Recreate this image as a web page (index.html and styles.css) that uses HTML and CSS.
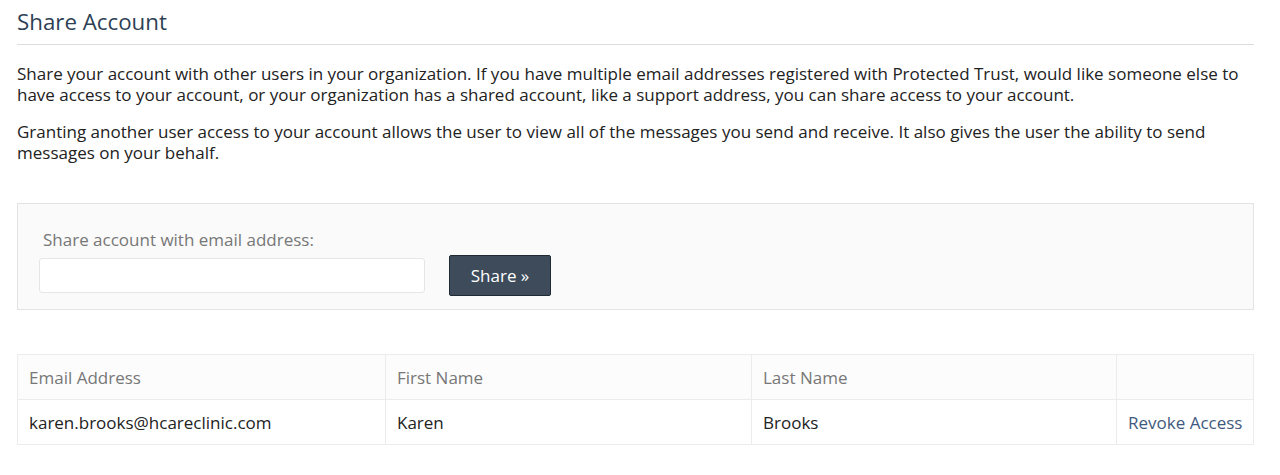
FILE: index.html
```html
<!DOCTYPE html>
<html lang="en">
<head>
<meta charset="utf-8">
<title>Share Account</title>
<link rel="stylesheet" href="styles.css">
</head>
<body>
<div class="page">
  <h1 class="title">Share Account</h1>
  <p class="intro">Share your account with other users in your organization. If you have multiple email addresses registered with Protected Trust, would like someone else to have access to your account, or your organization has a shared account, like a support address, you can share access to your account.</p>
  <p class="intro">Granting another user access to your account allows the user to view all of the messages you send and receive. It also gives the user the ability to send messages on your behalf.</p>

  <div class="well">
    <label class="well-label" for="share-email">Share account with email address:</label>
    <div class="well-row">
      <input id="share-email" class="email-input" type="text">
      <button class="btn-share" type="button">Share »</button>
    </div>
  </div>

  <table class="share-table">
    <thead>
      <tr>
        <th class="col-email">Email Address</th>
        <th class="col-first">First Name</th>
        <th class="col-last">Last Name</th>
        <th class="col-action"></th>
      </tr>
    </thead>
    <tbody>
      <tr>
        <td>karen.brooks@hcareclinic.com</td>
        <td>Karen</td>
        <td>Brooks</td>
        <td><a class="revoke" href="#">Revoke Access</a></td>
      </tr>
    </tbody>
  </table>
</div>
</body>
</html>
```

FILE: styles.css
```css
* { box-sizing: border-box; }

html, body {
  margin: 0;
  padding: 0;
  background: #ffffff;
}

body {
  font-family: "Open Sans", "Liberation Sans", Arial, sans-serif;
  font-size: 17px;
  color: #222222;
}

.page {
  padding: 0 26px 0 17px;
}

.title {
  margin: 0;
  padding: 9px 0 9px;
  font-size: 22.3px;
  line-height: 26px;
  font-weight: 400;
  color: #2e3f55;
  border-bottom: 1px solid #dddddd;
}

.intro {
  margin: 18px 0 16px;
  line-height: 21px;
  color: #222222;
}

.intro + .intro {
  margin-top: 0;
}

.well {
  margin-top: 40px;
  background: #fafafa;
  border: 1px solid #e3e3e3;
  padding: 25px 22px 13px 21px;
}

.well-label {
  display: block;
  padding-left: 4px;
  color: #777777;
  font-size: 17px;
  line-height: 22px;
  margin-bottom: 4px;
}

.well-row {
  display: flex;
  align-items: center;
  gap: 24px;
}

.email-input {
  width: 386px;
  height: 35px;
  border: 1px solid #e6e6e6;
  border-radius: 3px;
  background: #ffffff;
  font-family: inherit;
  font-size: 17px;
}

.btn-share {
  width: 102px;
  height: 41px;
  background: #3d4b5b;
  border: 1px solid #1f2a35;
  border-radius: 2px;
  color: #ffffff;
  font-family: inherit;
  font-size: 17px;
  padding: 0;
}

.share-table {
  margin-top: 44px;
  width: 100%;
  table-layout: fixed;
  border-collapse: collapse;
  border: 1px solid #ececec;
}

.share-table th,
.share-table td {
  border: 1px solid #ececec;
  padding: 0 11px;
  height: 45px;
  text-align: left;
  font-size: 17px;
  white-space: nowrap;
}

.share-table th {
  font-weight: 400;
  color: #777777;
  background: #fcfcfc;
}

.share-table td {
  color: #222222;
}

.col-email { width: 368px; }
.col-first { width: 366px; }
.col-last { width: 365px; }

.revoke {
  color: #3f5a7d;
  text-decoration: none;
}
```
